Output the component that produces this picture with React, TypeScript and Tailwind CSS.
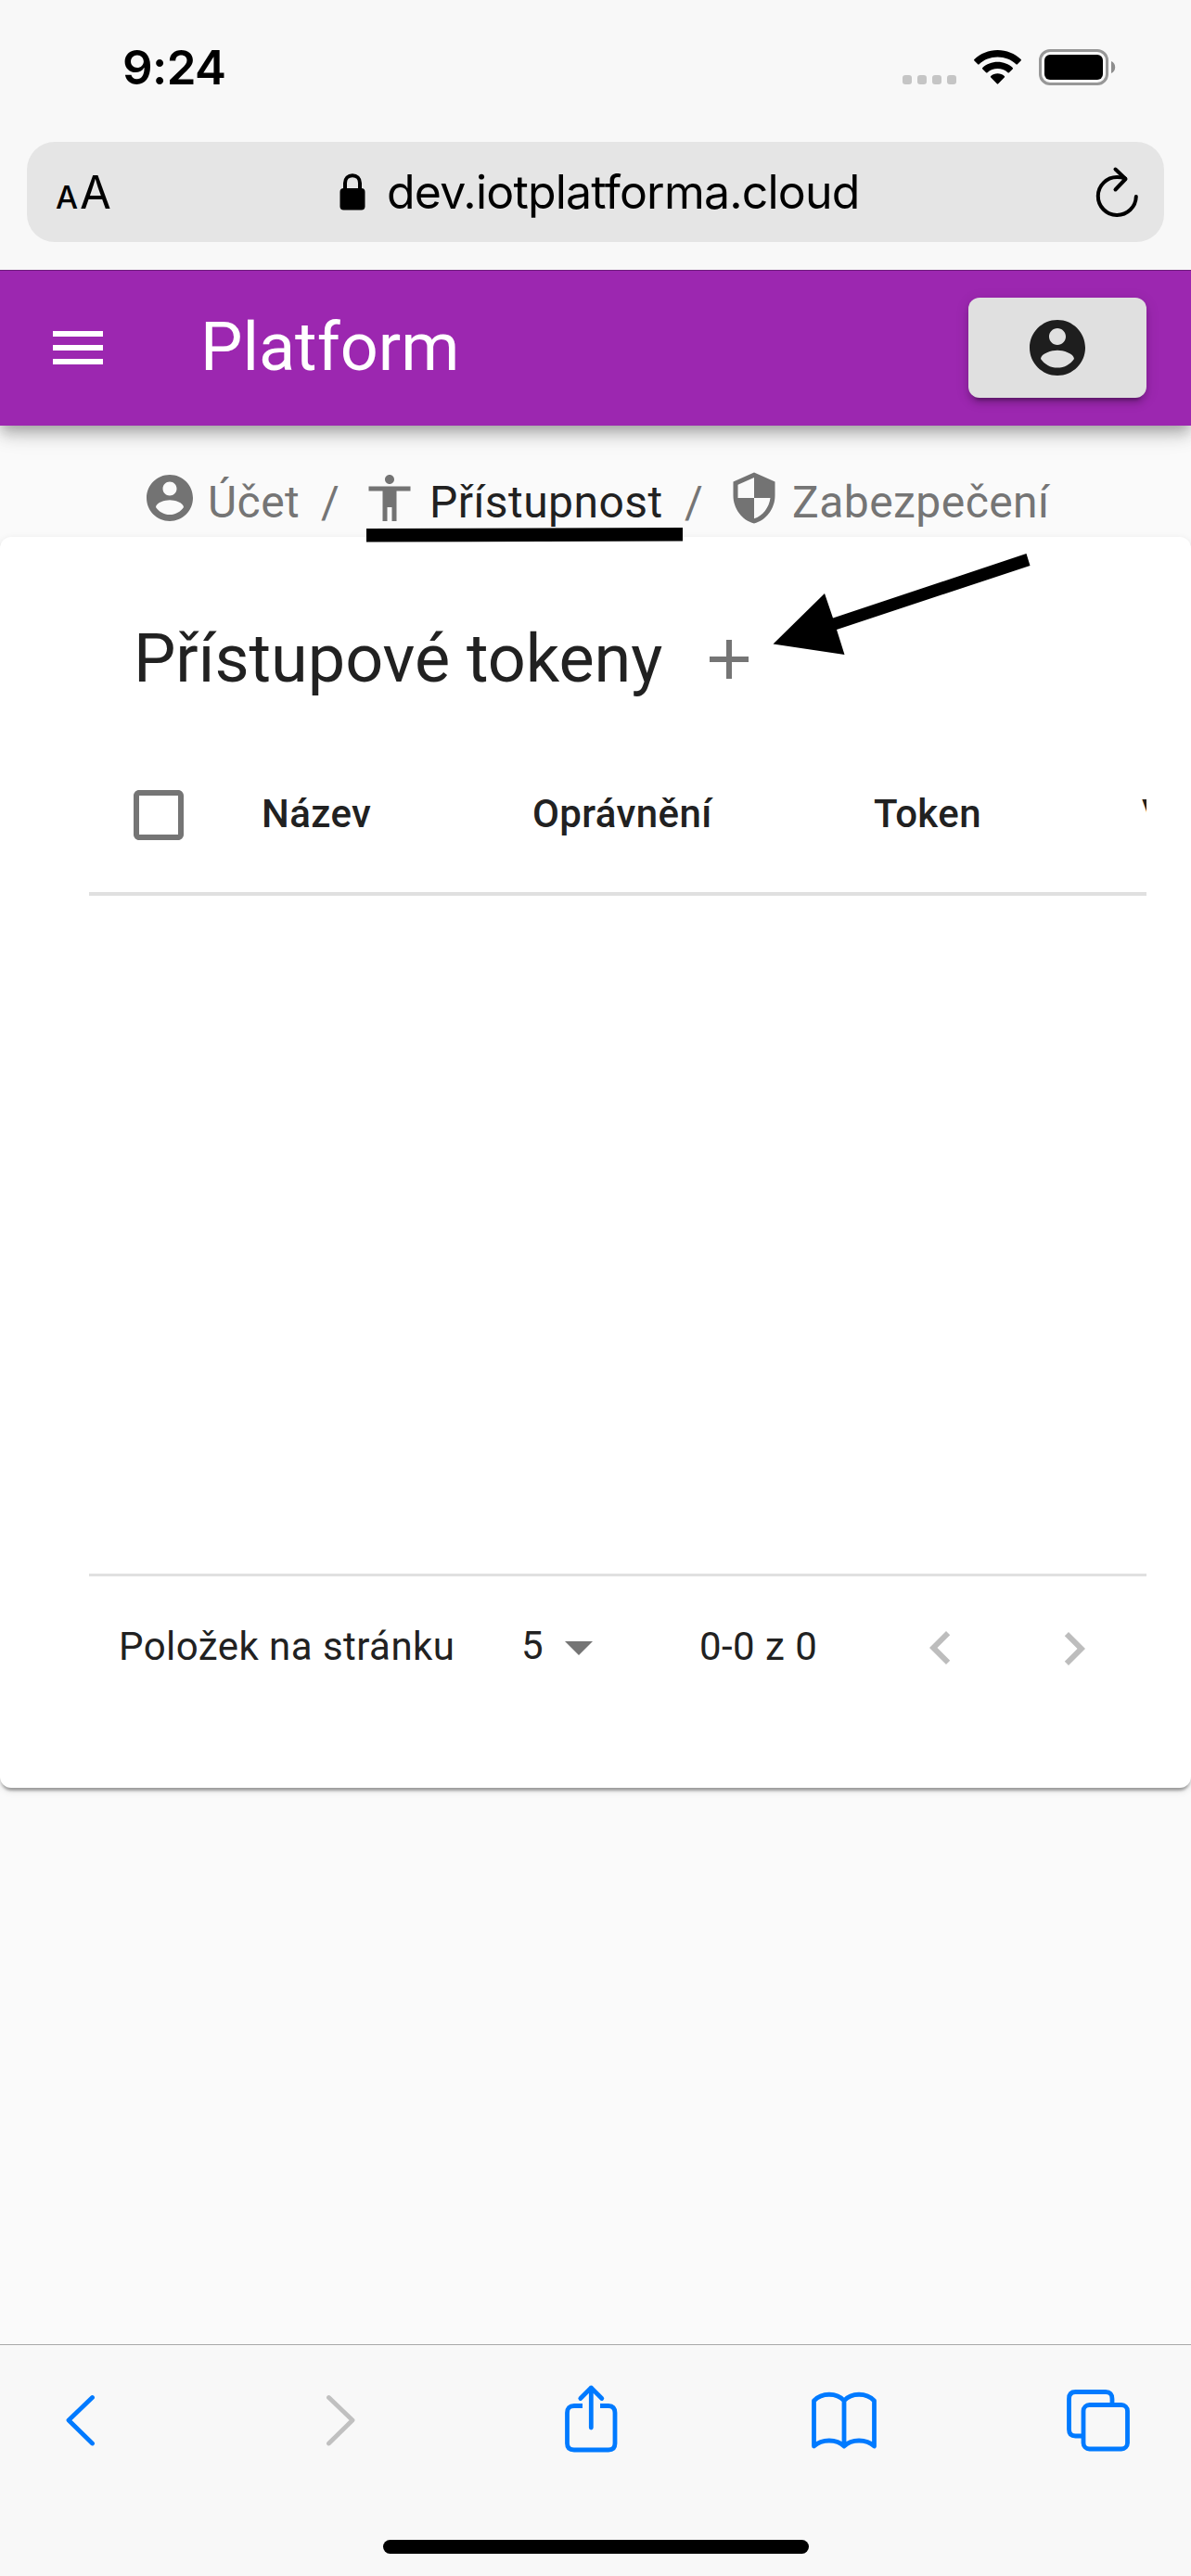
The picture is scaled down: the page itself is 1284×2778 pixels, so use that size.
import type { ReactNode } from "react";

const ROBOTO = "font-['Roboto',sans-serif]";
const INTER = "font-['Inter',sans-serif]";

function MaterialIcon({ d, className }: { d: string; className: string }) {
  return (
    <svg viewBox="0 0 24 24" fill="currentColor" className={`block shrink-0 ${className}`} aria-hidden="true">
      <path d={d} />
    </svg>
  );
}

const paths = {
  menu: "M3 18h18v-2H3v2zm0-5h18v-2H3v2zm0-7v2h18V6H3z",
  account:
    "M12 2C6.48 2 2 6.48 2 12s4.48 10 10 10 10-4.48 10-10S17.52 2 12 2zm0 3c1.66 0 3 1.34 3 3s-1.34 3-3 3-3-1.34-3-3 1.34-3 3-3zm0 14.2c-2.5 0-4.71-1.28-6-3.22.03-1.99 4-3.08 6-3.08 1.99 0 5.97 1.09 6 3.08-1.29 1.94-3.5 3.22-6 3.22z",
  accessibility:
    "M12 2c1.1 0 2 .9 2 2s-.9 2-2 2-2-.9-2-2 .9-2 2-2zm9 7h-6v13h-2v-6h-2v6H9V9H3V7h18v2z",
  shield:
    "M12 1L3 5v6c0 5.55 3.84 10.74 9 12 5.16-1.26 9-6.45 9-12V5l-9-4zm0 10.99h7c-.53 4.12-3.28 7.79-7 8.94V12H5V6.3l7-3.11v8.8z",
  add: "M19 13h-6v6h-2v-6H5v-2h6V5h2v6h6v2z",
  checkbox:
    "M19 5v14H5V5h14m0-2H5c-1.1 0-2 .9-2 2v14c0 1.1.9 2 2 2h14c1.1 0 2-.9 2-2V5c0-1.1-.9-2-2-2z",
  dropDown: "M7 10l5 5 5-5z",
  left: "M15.41 7.41L14 6l-6 6 6 6 1.41-1.41L10.83 12z",
  right: "M10 6L8.59 7.41 13.17 12l-4.58 4.59L10 18l6-6z",
};

function StatusBar() {
  return (
    <div className={`flex h-[153px] items-start pl-[132px] ${INTER}`}>
      <div className="mt-[42px] w-[841px] text-[51px] leading-[61px] font-semibold tracking-[-0.6px] text-black">9:24</div>
      <div className="mt-[81px] flex gap-[6px]">
        {[0, 1, 2, 3].map((i) => (
          <span key={i} className="h-[10px] w-[10px] rounded-[3px] bg-[#c5c5c5]" />
        ))}
      </div>
      <svg viewBox="0 0 51 38" className="mt-[54px] ml-[19px] h-[38px] w-[51px] shrink-0" fill="black">
        <path d="M25.5 0C35.2 0 44 3.7 50.6 10a1 1 0 0 1 0 1.4l-3.8 3.9a1 1 0 0 1-1.4 0C40.2 10.4 33.2 7.6 25.5 7.6S10.8 10.4 5.6 15.3a1 1 0 0 1-1.4 0L.4 11.4a1 1 0 0 1 0-1.4C7 3.7 15.8 0 25.5 0z" />
        <path d="M25.5 12.7c6.2 0 11.9 2.3 16.2 6.2a1 1 0 0 1 0 1.5l-3.8 3.8a1 1 0 0 1-1.4 0 16.5 16.5 0 0 0-22 0 1 1 0 0 1-1.4 0l-3.8-3.8a1 1 0 0 1 0-1.5c4.3-3.9 10-6.2 16.2-6.2z" />
        <path d="M25.5 25.2c2.8 0 5.3 1 7.3 2.7a1 1 0 0 1 0 1.5l-6.6 6.9a1 1 0 0 1-1.4 0l-6.6-6.9a1 1 0 0 1 0-1.5c2-1.7 4.5-2.7 7.3-2.7z" />
      </svg>
      <svg viewBox="0 0 83 39" className="mt-[53px] ml-[19px] h-[39px] w-[83px] shrink-0">
        <rect x="1.5" y="1.5" width="72" height="36" rx="10.5" fill="none" stroke="#979797" strokeWidth="3" />
        <rect x="6" y="6" width="63" height="27" rx="6" fill="black" />
        <path d="M78 13c2.6 1 4.2 3.5 4.2 6.5S80.6 25 78 26z" fill="#8e8e8e" />
      </svg>
    </div>
  );
}

function AddressBar() {
  return (
    <div className={`mx-[29px] flex h-[108px] items-center rounded-[30px] bg-[#e5e5e5] text-black ${INTER}`}>
      <div className="mt-[6px] flex w-[337px] items-baseline pl-[31px] leading-[60px]">
        <span className="w-[26px] text-[34px] font-medium tracking-[-1px]">A</span>
        <span className="text-[49px]">A</span>
      </div>
      <svg viewBox="0 0 28 40" className="h-[40px] w-[28px] shrink-0">
        <path d="M6 18V10.5C6 5.5 9.5 2.2 14 2.2s8 3.3 8 8.3V18" fill="none" stroke="black" strokeWidth="4" />
        <rect x="0.5" y="16" width="27" height="23.5" rx="4" fill="black" />
      </svg>
      <div className="ml-[23px] w-[764px] text-[50px] leading-[60px] whitespace-nowrap tracking-[-0.8px]">dev.iotplatforma.cloud</div>
      <svg
        viewBox="0 0 46 56"
        className="mt-[-1px] h-[56px] w-[46px] shrink-0"
        fill="none"
        stroke="black"
        strokeWidth="4"
        strokeLinecap="round"
        strokeLinejoin="round"
      >
        <path d="M32 13.5C29 12.4 26.5 12 23.5 12A20.5 20.5 0 1 0 43.8 33" />
        <path d="M21.5 3.5L32.5 14L21.5 25.5" />
      </svg>
    </div>
  );
}

function AppHeader() {
  return (
    <header className="relative z-10 flex h-[168px] shrink-0 items-center border-t border-[#6d1b7b] bg-[#9c27b0] px-[48px] pb-px shadow-[0_6px_12px_-3px_rgba(0,0,0,0.2),0_12px_15px_0_rgba(0,0,0,0.14),0_3px_30px_0_rgba(0,0,0,0.12)]">
      <MaterialIcon d={paths.menu} className="h-[72px] w-[72px] text-white" />
      <h1 className="ml-[96px] grow text-[72px] leading-[96px] font-normal text-white">Platform</h1>
      <button className="flex h-[108px] w-[192px] items-center justify-center rounded-[12px] bg-[#e0e0e0] text-[#1e1e1e] shadow-[0_9px_3px_-6px_rgba(0,0,0,0.2),0_6px_6px_0_rgba(0,0,0,0.14),0_3px_15px_0_rgba(0,0,0,0.12)]">
        <MaterialIcon d={paths.account} className="h-[72px] w-[72px]" />
      </button>
    </header>
  );
}

function Crumb({ icon, active, className, children }: { icon: string; active?: boolean; className: string; children: ReactNode }) {
  return (
    <li className={`flex shrink-0 items-start ${className}`}>
      <MaterialIcon d={icon} className="h-[60px] w-[60px] text-[#737373]" />
      <span className={`mt-[-1px] leading-[72px] whitespace-nowrap ${active ? "ml-[13px] text-[#212121]" : "ml-[11px] text-[#757575]"}`}>
        {children}
      </span>
    </li>
  );
}

function Breadcrumbs() {
  return (
    <ol className="relative flex h-[120px] shrink-0 items-start pt-[48px] pl-[153px] text-[48px] tracking-[0.45px]">
      <Crumb icon={paths.account} className="w-[193px]">Účet</Crumb>
      <li className="mt-[-1px] w-[44px] leading-[72px] text-[#757575]">/</li>
      <Crumb icon={paths.accessibility} active className="w-[348px]">Přístupnost</Crumb>
      <li className="mt-[-1px] w-[45px] leading-[72px] text-[#757575]">/</li>
      <Crumb icon={paths.shield} className="w-[360px]">Zabezpečení</Crumb>
      <svg viewBox="0 0 342 16" className="absolute top-[110px] left-[395px] z-10 h-[16px] w-[342px]">
        <path d="M0 1L341 0V14.5L0 15.5z" fill="black" />
      </svg>
    </ol>
  );
}

function TokensCard() {
  return (
    <section className="relative h-[1349px] shrink-0 rounded-[12px] bg-white text-[#212121] shadow-[0_6px_3px_-3px_rgba(0,0,0,0.2),0_3px_3px_0_rgba(0,0,0,0.14),0_3px_9px_0_rgba(0,0,0,0.12)]">
      <div className="flex h-[264px] items-center pl-[144px]">
        <h2 className="w-[606px] text-[72px] leading-[96px] font-normal tracking-[-0.05px] whitespace-nowrap">Přístupové tokeny</h2>
        <MaterialIcon d={paths.add} className="h-[72px] w-[72px] text-[#757575]" />
      </div>
      <svg viewBox="0 0 280 112" className="absolute top-[17px] left-[832px] h-[112px] w-[280px]">
        <path d="M1.5 98.5L57 44L66 70.5L274.5 1L278.5 14L70 83L78.5 110z" fill="black" />
      </svg>
      <div className="mr-[48px] ml-[96px]">
        <div className="flex h-[123px] items-start overflow-hidden border-b-4 border-[#e0e0e0] pl-[39px] text-[42px] leading-[60px] font-medium tracking-[0.4px]">
          <MaterialIcon d={paths.checkbox} className="h-[72px] w-[72px] text-[#757575]" />
          <span className="mt-[5px] ml-[75px] w-[292px] shrink-0">Název</span>
          <span className="mt-[5px] w-[368px] shrink-0">Oprávnění</span>
          <span className="mt-[5px] w-[289px] shrink-0">Token</span>
          <span className="mt-[5px] shrink-0 whitespace-nowrap">V</span>
        </div>
        <div className="h-[731px]" />
        <div className="flex h-[160px] items-center border-t-3 border-[#e0e0e0] pl-[32px] text-[42px] leading-[60px] tracking-[0.45px]">
          <span className="mt-[-5px] w-[434px] whitespace-nowrap">Položek na stránku</span>
          <span className="mt-[-8px] w-[26px]">5</span>
          <MaterialIcon d={paths.dropDown} className="mt-[-6px] h-[72px] w-[72px] text-[#757575]" />
          <span className="mt-[-5px] ml-[94px] w-[224px] whitespace-nowrap">0-0 z 0</span>
          <MaterialIcon d={paths.left} className="mt-[-3px] h-[72px] w-[72px] text-[#bdbdbd]" />
          <MaterialIcon d={paths.right} className="mt-[-2px] ml-[72px] h-[72px] w-[72px] text-[#bdbdbd]" />
        </div>
      </div>
    </section>
  );
}

function BrowserToolbar() {
  const stroke = { fill: "none", strokeLinecap: "round", strokeLinejoin: "round", strokeWidth: 4.8 } as const;
  return (
    <footer className="mt-auto flex h-[250px] shrink-0 flex-col items-center border-t border-[#a9a9a9] bg-[#f8f8f8]">
      <nav className="flex h-[162px] w-full items-center pl-[70px]">
        <svg viewBox="0 0 32 56" className="h-[56px] w-[32px] shrink-0" {...stroke} stroke="#007aff">
          <path d="M29.5 3.5L4 28L29.5 53" />
        </svg>
        <svg viewBox="0 0 32 56" className="ml-[250px] h-[56px] w-[32px] shrink-0" {...stroke} stroke="#c0c0c0">
          <path d="M2.5 3.5L28 28L2.5 53" />
        </svg>
        <svg viewBox="0 0 58 74" className="mt-[-5px] ml-[224px] h-[74px] w-[58px] shrink-0" {...stroke} stroke="#007aff">
          <path d="M20 23.5H11Q3.500 23.5 3.500 31V64Q3.500 71 11 71H48Q55 71 55 64V31Q55 23.5 48 23.5H39" strokeLinecap="butt" />
          <path d="M29.3 47V4M17.8 15.5L29.3 4L40.8 15.5" />
        </svg>
        <svg viewBox="0 0 72 64" className="mt-[-1px] ml-[208px] h-[64px] w-[72px] shrink-0" {...stroke} stroke="#007aff">
          <path d="M36 11C28 2 12 2 3.5 11V60C12 52 28 52 36 60C44 52 60 52 68.5 60V11C60 2 44 2 36 11V60" />
        </svg>
        <svg viewBox="0 0 68 68" className="mt-[-1px] ml-[204px] h-[68px] w-[68px] shrink-0" {...stroke} stroke="#007aff">
          <path d="M49 17V11Q49 3.5 42 3.5H9.5Q2.5 3.5 2.5 11V44Q2.5 51 9.5 51H16" strokeLinecap="butt" />
          <rect x="18" y="17.5" width="47.5" height="47.5" rx="6.5" />
        </svg>
      </nav>
      <div className="mt-[48px] h-[15px] w-[459px] rounded-full bg-black" />
    </footer>
  );
}

export default function App() {
  return (
    <div className={`flex h-[2778px] w-[1284px] flex-col overflow-hidden bg-[#fafafa] ${ROBOTO}`}>
      <div className="relative z-20 h-[291px] shrink-0 bg-[#f8f8f8]">
        <StatusBar />
        <AddressBar />
      </div>
      <AppHeader />
      <Breadcrumbs />
      <TokensCard />
      <BrowserToolbar />
    </div>
  );
}
